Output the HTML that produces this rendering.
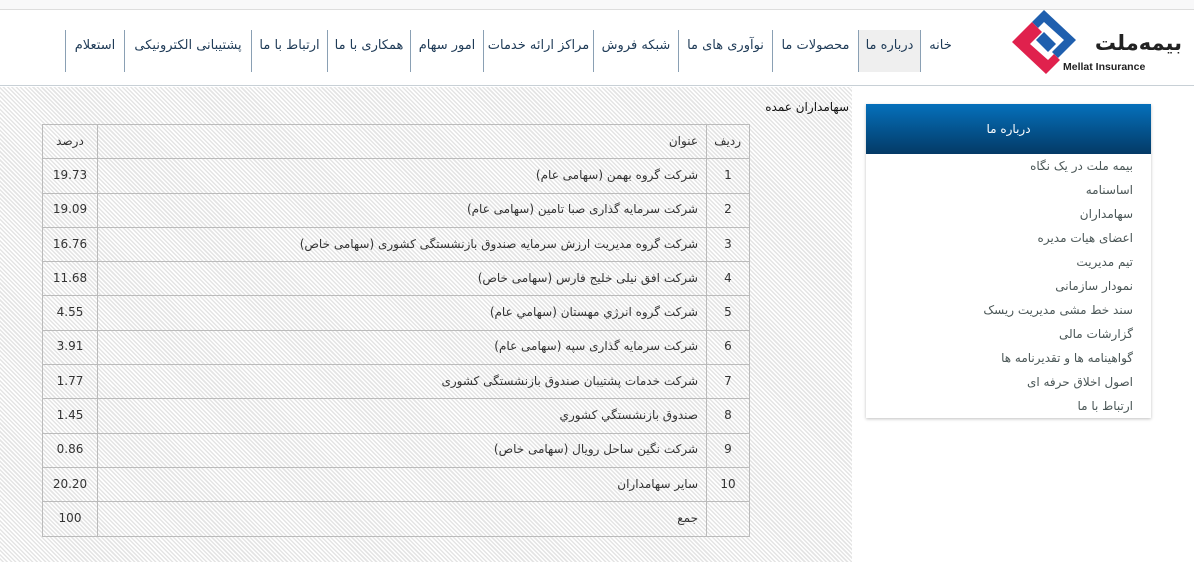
<!DOCTYPE html>
<html><head><meta charset="utf-8"><style>
*{margin:0;padding:0;box-sizing:border-box}
body{width:1194px;height:562px;overflow:hidden;position:relative;background:#fff;font-family:"DejaVu Sans","Liberation Sans","Noto Sans CJK SC",sans-serif;}
.top{position:absolute;left:0;top:0;width:1194px;height:10px;background:#f8f8f9;border-bottom:1px solid #ddd}
.hdr{position:absolute;left:0;top:10px;width:1194px;height:76px;border-bottom:1px solid #c8d0d6}
.nav a{position:absolute;top:30px;height:42px;border-left:1px solid #8aa0b4;color:#1f3b57;font-size:13px;text-decoration:none;line-height:32px;text-align:center;direction:rtl;white-space:nowrap}
.hatch{position:absolute;left:0;top:87px;width:852px;height:475px;background:repeating-linear-gradient(45deg,#fff 0 1.5px,#e4e4e4 1.5px 3px);}
.title{position:absolute;right:345px;top:100px;font-size:12px;color:#111;direction:rtl}
table{position:absolute;left:42px;top:124px;width:708px;border-collapse:collapse;direction:rtl;font-size:12px;color:#333;table-layout:fixed}
td{border:1px solid #bbb;padding:0 8px 2px;height:34.3px;text-align:right}
td.n{width:43px;text-align:center}
td.p{width:55px;text-align:center}
.side{position:absolute;left:866px;top:104px;width:285px;height:314px;background:#fff;box-shadow:0 1px 3px rgba(0,0,0,.25)}
.sh{height:50px;background:linear-gradient(#0570bb,#043a66);color:#fff;font-size:12px;text-align:center;line-height:50px;direction:rtl}
.side ul{list-style:none;direction:rtl;padding:0 18px 0 0}
.side li{font-size:12px;color:#4a5656;height:24px;line-height:24px}
</style></head><body>
<div class="top"></div>
<div class="hdr"></div>
<svg style="position:absolute;left:1010px;top:8px" width="72" height="68" viewBox="0 0 72 68">
<polygon points="34,2 66,32 48,50 42,44 54,32 34,14 28,20 22,14" fill="#1f5fae"/>
<polygon points="2,34 22,14 32,24 20,36 38,52 44,46 50,52 36,66" fill="#e0214d"/>
<polygon points="26,32 34,24 46,36 38,44" fill="#1f5fae"/>
</svg>
<div style="position:absolute;left:1070px;top:30px;font-size:21px;font-weight:bold;color:#222;direction:rtl;width:112px;text-align:right;line-height:26px;white-space:nowrap">بیمه‌ملت</div>
<div style="position:absolute;left:1063px;top:61px;font-size:10.5px;font-weight:bold;color:#222;font-family:'Liberation Sans',sans-serif">Mellat Insurance</div>
<div class="nav">
<a style="left:65px;width:59px">استعلام</a>
<a style="left:124px;width:127px">پشتیبانی الکترونیکی</a>
<a style="left:251px;width:76px">ارتباط با ما</a>
<a style="left:327px;width:83px">همکاری با ما</a>
<a style="left:410px;width:73px">امور سهام</a>
<a style="left:483px;width:110px">مراکز ارائه خدمات</a>
<a style="left:593px;width:85px">شبکه فروش</a>
<a style="left:678px;width:94px">نوآوری های ما</a>
<a style="left:772px;width:86px">محصولات ما</a>
<a style="left:858px;width:62px;background:#efefef">درباره ما</a>
<a style="left:920px;width:40px">خانه</a>
</div>
<div class="hatch"></div>
<div class="title">سهامداران عمده</div>
<table>
<tr><td class="n">ردیف</td><td>عنوان</td><td class="p">درصد</td></tr>
<tr><td class="n">1</td><td>شرکت گروه بهمن (سهامی عام)</td><td class="p">19.73</td></tr>
<tr><td class="n">2</td><td>شرکت سرمایه گذاری صبا تامین (سهامی عام)</td><td class="p">19.09</td></tr>
<tr><td class="n">3</td><td>شرکت گروه مدیریت ارزش سرمایه صندوق بازنشستگی کشوری (سهامی خاص)</td><td class="p">16.76</td></tr>
<tr><td class="n">4</td><td>شرکت افق نیلی خلیج فارس (سهامی خاص)</td><td class="p">11.68</td></tr>
<tr><td class="n">5</td><td>شرکت گروه انرژي مهستان (سهامي عام)</td><td class="p">4.55</td></tr>
<tr><td class="n">6</td><td>شرکت سرمایه گذاری سپه (سهامی عام)</td><td class="p">3.91</td></tr>
<tr><td class="n">7</td><td>شرکت خدمات پشتیبان صندوق بازنشستگی کشوری</td><td class="p">1.77</td></tr>
<tr><td class="n">8</td><td>صندوق بازنشستگي کشوري</td><td class="p">1.45</td></tr>
<tr><td class="n">9</td><td>شرکت نگین ساحل رویال (سهامی خاص)</td><td class="p">0.86</td></tr>
<tr><td class="n">10</td><td>سایر سهامداران</td><td class="p">20.20</td></tr>
<tr><td class="n"></td><td>جمع</td><td class="p">100</td></tr>
</table>
<div class="side">
<div class="sh">درباره ما</div>
<ul>
<li>بیمه ملت در یک نگاه</li><li>اساسنامه</li><li>سهامداران</li><li>اعضای هیات مدیره</li><li>تیم مدیریت</li><li>نمودار سازمانی</li><li>سند خط مشی مدیریت ریسک</li><li>گزارشات مالی</li><li>گواهینامه ها و تقدیرنامه ها</li><li>اصول اخلاق حرفه ای</li><li>ارتباط با ما</li>
</ul>
</div>
</body></html>
